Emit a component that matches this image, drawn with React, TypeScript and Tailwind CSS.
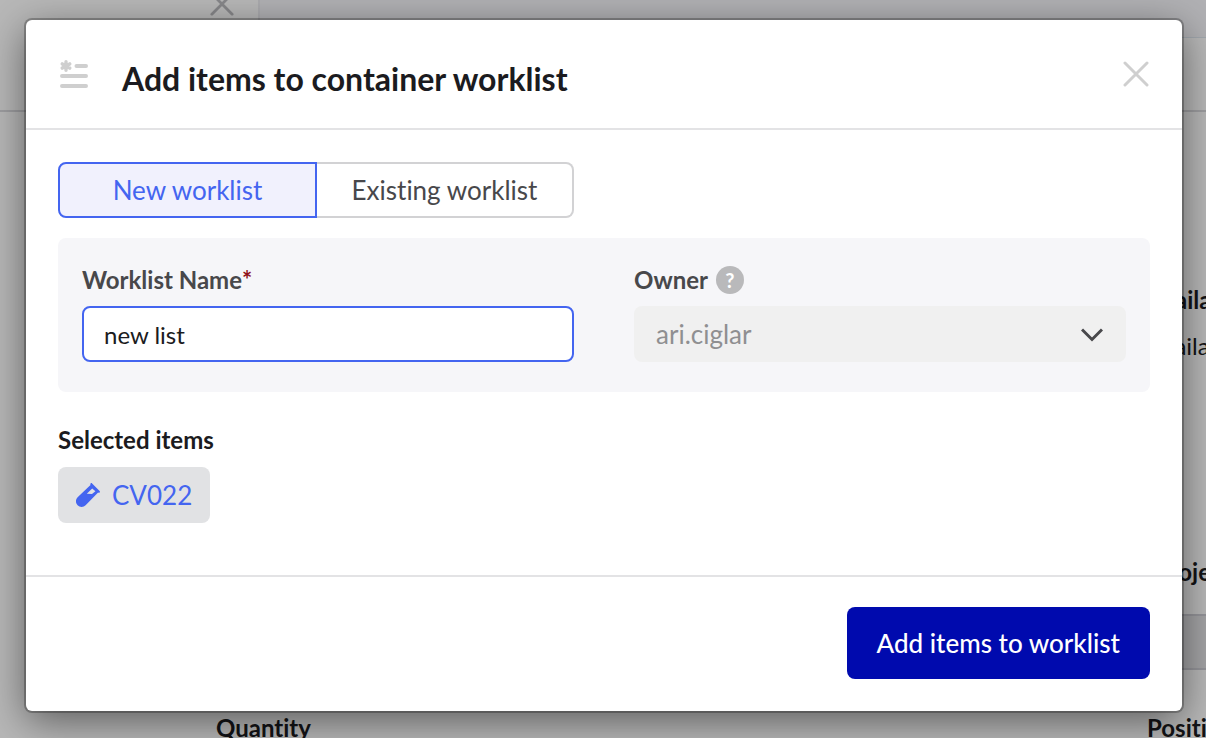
import { useState } from 'react';

type Tab = 'new' | 'existing';

const tabs: { id: Tab; label: string }[] = [
    { id: 'new', label: 'New worklist' },
    { id: 'existing', label: 'Existing worklist' },
];

function CloseIcon({ className }: { className?: string }) {
    return (
        <svg
            viewBox="0 0 26 26"
            className={className}
            fill="none"
            stroke="currentColor"
            strokeWidth="3"
            strokeLinecap="round"
            aria-hidden="true"
        >
            <path d="M2 2l22 22M24 2L2 24" />
        </svg>
    );
}

function WorklistIcon() {
    return (
        <svg
            viewBox="0 0 28 28"
            className="h-7 w-7 shrink-0 text-[#cfcfcf]"
            fill="none"
            stroke="currentColor"
            strokeLinecap="round"
            aria-hidden="true"
        >
            <path strokeWidth="4" d="M16.5 6H26M2 16h24M2 26h24" />
            <path
                strokeWidth="3.4"
                d="M6 1.700v8.600M2.300 3.900l7.400 4.200M9.700 3.900L2.300 8.100"
            />
        </svg>
    );
}

function TubeIcon() {
    return (
        <svg
            viewBox="0 0 24 24"
            className="h-6 w-6 shrink-0"
            fill="currentColor"
            aria-hidden="true"
        >
            <path
                fillRule="evenodd"
                d="M14.600.4c.5-.5 1-.5 1.500 0l7.500 7.500c.5.5.5 1 0 1.500-.5.4-1 .4-1.500.1L9.600 22.200a5.600 5.600 0 0 1-8 0 5.600 5.600 0 0 1 0-8L14.500 1.900c-.3-.5-.3-1 .1-1.500zM16.200 5.600L10.800 10.800l5.200.2 3.400-2.800z"
            />
        </svg>
    );
}

// Record page that stays visible around the dialog
function RecordPage() {
    return (
        <div
            className="flex h-screen flex-col overflow-hidden bg-white text-2xl text-[#1b1b20]"
            aria-hidden="true"
        >
            <header className="flex h-28 shrink-0 border-b-2 border-[#dcdcdf]">
                <div className="flex w-[260px] justify-end border-r-2 border-[#ededf2] pr-6">
                    <CloseIcon className="-mt-2 h-6 w-6 text-[#bbbbbf]" />
                </div>
                <div className="flex-1">
                    <div className="h-[38px] border-b border-[#e0e8f0] bg-[#f6f6fa]" />
                </div>
            </header>
            <div className="flex flex-1 pl-[216px]">
                <div className="flex w-[931px] shrink-0 flex-col pt-[600px]">
                    <b className="font-bold">Quantity</b>
                </div>
                <div className="flex shrink-0 flex-col pt-[172px]">
                    <b className="font-bold">Availability</b>
                    <span className="mt-3.5">Available</span>
                    <div className="mt-[194px] pl-2">
                        <b className="block font-bold">Project</b>
                        <div className="mt-[26px] h-14 w-40 border-y-2 border-[#cfcfd6] bg-[#e3e3e6]" />
                    </div>
                    <b className="mt-[42px] font-bold">Position</b>
                </div>
            </div>
        </div>
    );
}

export default function App() {
    const [tab, setTab] = useState<Tab>('new');
    const [name, setName] = useState('new list');

    return (
        <div className="relative font-['Lato',sans-serif] [font-variant-ligatures:none]">
            <RecordPage />

            <div className="absolute inset-0 flex bg-black/28 pt-5 pr-6 pb-[27px] pl-[26px]">
                <div
                    role="dialog"
                    aria-labelledby="dialog-title"
                    className="flex flex-1 flex-col rounded-md bg-white shadow-[0_0_0_2px_rgba(0,0,0,0.25),0_10px_40px_rgba(0,0,0,0.5)]"
                >
                    <div className="flex h-[110px] shrink-0 items-center border-b-2 border-[#e3e3e5] pr-[33px] pl-[34px]">
                        <WorklistIcon />
                        <h2
                            id="dialog-title"
                            className="ml-[34px] flex-1 pt-2.5 text-[32px] leading-10 font-bold text-[#1b1b20]"
                        >
                            Add items to container worklist
                        </h2>
                        <button type="button" aria-label="Close">
                            <CloseIcon className="h-[26px] w-[26px] text-[#cfcfcf]" />
                        </button>
                    </div>

                    <div className="flex-1 px-8 pt-8">
                        <div className="flex w-[516px]">
                            {tabs.map((t) => (
                                <button
                                    key={t.id}
                                    type="button"
                                    aria-pressed={tab === t.id}
                                    onClick={() => setTab(t.id)}
                                    className={`h-14 flex-1 border-2 text-[26px] first:rounded-l-lg last:rounded-r-lg ${
                                        tab === t.id
                                            ? 'border-[#4465f0] bg-[#f1f1fd] text-[#4465f0]'
                                            : 'border-[#d2d2d4] text-[#48484b] not-first:border-l-0 not-last:border-r-0'
                                    }`}
                                >
                                    {t.label}
                                </button>
                            ))}
                        </div>

                        <div className="mt-5 grid grid-cols-2 gap-[60px] rounded-lg bg-[#f6f6f9] px-6 pt-7 pb-[30px]">
                            <div>
                                <label
                                    htmlFor="worklist-name"
                                    className="flex h-7 items-center text-2xl font-bold text-[#48484b]"
                                >
                                    Worklist Name
                                    <span className="text-[#8f1018]">*</span>
                                </label>
                                <input
                                    id="worklist-name"
                                    type="text"
                                    value={name}
                                    onChange={(e) => setName(e.target.value)}
                                    className="mt-3 block h-14 w-full rounded-lg border-2 border-[#4465f0] bg-white px-5 text-2xl text-[#1b1b20] outline-none"
                                />
                            </div>
                            <div>
                                <div className="flex h-7 items-center gap-2">
                                    <label
                                        htmlFor="owner"
                                        className="text-2xl font-bold text-[#48484b]"
                                    >
                                        Owner
                                    </label>
                                    <span className="flex h-7 w-7 items-center justify-center rounded-full bg-[#b9b9bb] text-xl font-bold text-white">
                                        ?
                                    </span>
                                </div>
                                <div className="relative mt-3">
                                    <select
                                        id="owner"
                                        disabled
                                        className="block h-14 w-full appearance-none rounded-lg bg-[#f0f0f0] px-[22px] text-[26px] text-[#8f8f91] opacity-100"
                                    >
                                        <option>ari.ciglar</option>
                                    </select>
                                    <svg
                                        viewBox="0 0 22 14"
                                        className="pointer-events-none absolute top-[22px] right-[23px] h-3.5 w-[22px] text-[#48484b]"
                                        fill="none"
                                        stroke="currentColor"
                                        strokeWidth="3"
                                        aria-hidden="true"
                                    >
                                        <path d="M1 1.500l10 10 10-10" />
                                    </svg>
                                </div>
                            </div>
                        </div>

                        <h3 className="mt-8 text-2xl font-bold text-[#1b1b20]">
                            Selected items
                        </h3>
                        <a
                            href="#CV022"
                            className="mt-[11px] inline-flex h-14 items-center gap-3 rounded-lg bg-[#e1e2e4] px-[18px] text-[26px] text-[#4465f0]"
                        >
                            <TubeIcon />
                            CV022
                        </a>
                    </div>

                    <div className="flex shrink-0 justify-end border-t-2 border-[#e3e3e5] px-8 pt-[30px] pb-8">
                        <button
                            type="button"
                            className="h-[72px] rounded-lg bg-[#000aae] px-[30px] text-[26px] font-medium text-white"
                        >
                            Add items to worklist
                        </button>
                    </div>
                </div>
            </div>
        </div>
    );
}
